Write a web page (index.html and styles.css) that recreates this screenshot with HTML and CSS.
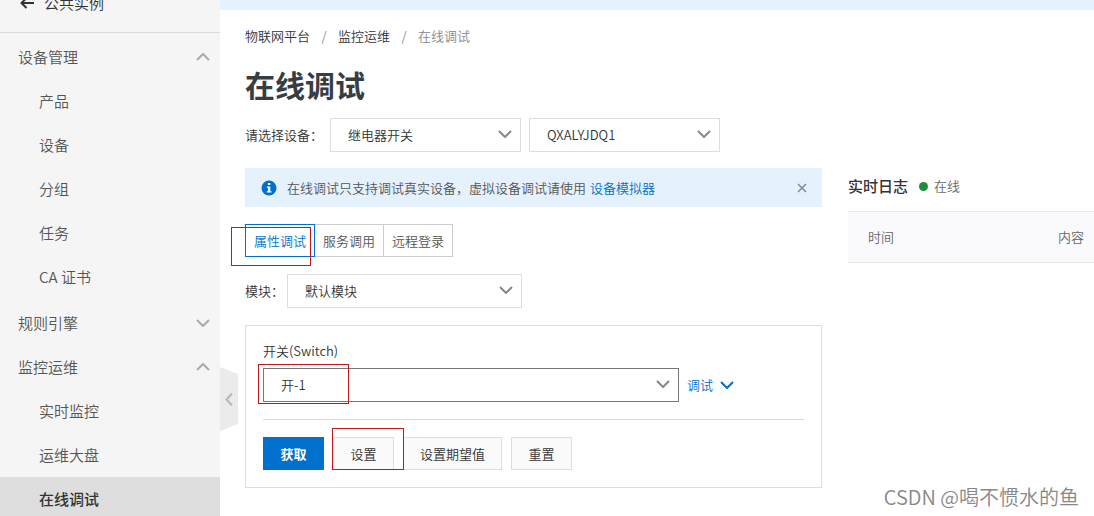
FILE: index.html
```html
<!DOCTYPE html>
<html lang="zh-CN">
<head>
<meta charset="utf-8">
<meta name="viewport" content="width=device-width, initial-scale=1">
<title>在线调试</title>
<link rel="stylesheet" href="styles.css">
</head>
<body>
<svg class="sprite" aria-hidden="true">
  <symbol id="chevron" viewBox="0 0 14 8"><path d="M1 1l6 6 6-6" fill="none" stroke="currentColor" stroke-width="2"/></symbol>
</svg>
<div class="app">
  <aside class="sidebar">
    <a class="instance" href="#">
      <svg class="back-icon" viewBox="0 0 14 12" aria-hidden="true"><path d="M14 6H2M6.500 1L1.500 6l5 5" fill="none" stroke="currentColor" stroke-width="2"/></svg>
      <span>公共实例</span>
    </a>
    <nav class="nav">
      <button class="nav-group" type="button">设备管理<svg class="chevron up"><use href="#chevron"/></svg></button>
      <ul class="nav-list">
        <li><a href="#">产品</a></li>
        <li><a href="#">设备</a></li>
        <li><a href="#">分组</a></li>
        <li><a href="#">任务</a></li>
        <li><a href="#">CA 证书</a></li>
      </ul>
      <button class="nav-group" type="button">规则引擎<svg class="chevron"><use href="#chevron"/></svg></button>
      <button class="nav-group" type="button">监控运维<svg class="chevron up"><use href="#chevron"/></svg></button>
      <ul class="nav-list">
        <li><a href="#">实时监控</a></li>
        <li><a href="#">运维大盘</a></li>
        <li><a class="current" href="#" aria-current="page">在线调试</a></li>
      </ul>
    </nav>
  </aside>
  <button class="collapse" type="button" aria-label="收起">
    <svg viewBox="0 0 18 64" aria-hidden="true"><path d="M0 0l18 7v50L0 64z" fill="#ebebeb"/><path d="M12 26.500L6.500 32.500l5.500 6" fill="none" stroke="#b8b8b8" stroke-width="2"/></svg>
  </button>
  <main class="main">
    <div class="topbar"></div>
    <div class="page">
      <nav class="breadcrumb" aria-label="路径">
        <a href="#">物联网平台</a><span class="slash">/</span><a href="#">监控运维</a><span class="slash">/</span><span class="here">在线调试</span>
      </nav>
      <h1>在线调试</h1>
      <div class="device-row">
        <label for="product">请选择设备：</label>
        <span class="select device">
          <select id="product"><option>继电器开关</option></select>
          <svg class="chevron"><use href="#chevron"/></svg>
        </span>
        <span class="select device">
          <select aria-label="设备"><option>QXALYJDQ1</option></select>
          <svg class="chevron"><use href="#chevron"/></svg>
        </span>
      </div>
      <div class="columns">
        <section class="debug">
          <div class="notice">
            <svg class="info-icon" viewBox="0 0 16 16" aria-hidden="true"><circle cx="8" cy="8" r="7.500" fill="#0070cc"/><path d="M6.900 2.900h2.400v2.200H6.900zM5.800 6.500h3.500v4.700h1.200v1.300H5.800v-1.300h1.200V7.800H5.800z" fill="#fff"/></svg>
            <p>在线调试只支持调试真实设备，虚拟设备调试请使用<a href="#">设备模拟器</a></p>
            <button class="close" type="button" aria-label="关闭"><svg viewBox="0 0 10 10"><path d="M1 1l8 8M9 1L1 9" fill="none" stroke="currentColor" stroke-width="1.500"/></svg></button>
          </div>
          <div class="tabs">
            <button class="tab active" type="button">属性调试</button>
            <button class="tab" type="button">服务调用</button>
            <button class="tab" type="button">远程登录</button>
            <span class="mark mark-tab"></span>
          </div>
          <div class="module-row">
            <label for="module">模块：</label>
            <span class="select module">
              <select id="module"><option>默认模块</option></select>
              <svg class="chevron"><use href="#chevron"/></svg>
            </span>
          </div>
          <div class="panel">
            <label class="field-label" for="switch">开关(Switch)</label>
            <div class="field">
              <span class="select dark">
                <select id="switch"><option>开-1</option></select>
                <svg class="chevron"><use href="#chevron"/></svg>
              </span>
              <button class="debug-menu" type="button">调试<svg class="chevron"><use href="#chevron"/></svg></button>
              <span class="mark mark-value"></span>
            </div>
            <div class="actions">
              <button class="btn primary" type="button">获取</button>
              <button class="btn" type="button">设置</button>
              <button class="btn" type="button">设置期望值</button>
              <button class="btn" type="button">重置</button>
              <span class="mark mark-set"></span>
            </div>
          </div>
        </section>
        <section class="log">
          <div class="log-head">
            <h2>实时日志</h2>
            <span class="dot"></span>
            <span class="status">在线</span>
          </div>
          <table class="log-table">
            <thead><tr><th scope="col">时间</th><th scope="col" class="content-col">内容</th></tr></thead>
          </table>
        </section>
      </div>
    </div>
  </main>
  <div class="watermark">CSDN @喝不惯水的鱼</div>
</div>
</body>
</html>
```
FILE: styles.css
```css
* { box-sizing: border-box; }

body {
  margin: 0;
  background: #fff;
  color: #333;
  font-family: "Noto Sans CJK SC", sans-serif;
  font-size: 13px;
  font-weight: 350;
  line-height: 22px;
}

button, select {
  font: inherit;
  color: inherit;
  margin: 0;
  border-radius: 0;
}

button { cursor: pointer; }
a { color: inherit; text-decoration: none; }
h1, h2, p, ul { margin: 0; padding: 0; }
ul { list-style: none; }
.sprite { position: absolute; width: 0; height: 0; }

.app {
  position: relative;
  display: flex;
  height: 100vh;
  overflow: hidden;
}

.chevron {
  width: 14px;
  height: 8px;
  color: #888;
  flex: none;
}
.chevron.up { transform: rotate(180deg); }

/* Sidebar */
.sidebar {
  flex: none;
  width: 220px;
  background: #f5f5f6;
  color: #555;
  font-size: 15px;
  overflow: hidden;
}
.instance {
  display: flex;
  align-items: center;
  gap: 10px;
  height: 59px;
  margin-top: -26px;
  padding-left: 20px;
  border-bottom: 1px solid #dadada;
  color: #333;
}
.back-icon { width: 14px; height: 12px; }
.nav { padding-top: 2px; }
.nav-group {
  display: flex;
  align-items: center;
  justify-content: space-between;
  width: 100%;
  height: 44px;
  padding: 0 10px 0 18px;
  border: 0;
  background: none;
}
.nav-group .chevron { color: #aaa; }
.nav-list { padding-bottom: 2px; }
.nav-list a {
  display: block;
  padding-left: 39px;
  line-height: 44px;
}
.nav-list .current {
  background: #dedede;
  color: #333;
  font-weight: 500;
}

.collapse {
  position: absolute;
  left: 220px;
  top: 367px;
  width: 18px;
  height: 64px;
  padding: 0;
  border: 0;
  background: none;
}
.collapse svg { display: block; width: 18px; height: 64px; }

/* Main */
.main { flex: 1; min-width: 0; }
.topbar { height: 10px; background: #e6f2fd; }
.page { padding: 15px 0 0 25px; }
.breadcrumb { display: flex; }
.slash { width: 28px; text-align: center; color: #888; }
.here { color: #888; }
h1 {
  margin: 15px 0 12px;
  font-size: 30px;
  line-height: 44px;
  font-weight: 700;
  color: #373d41;
}

.select {
  position: relative;
  display: flex;
}
.select select {
  appearance: none;
  width: 100%;
  height: 34px;
  padding: 0 36px 0 17px;
  border: 1px solid #dedede;
  background: #fff;
  outline: none;
}
.select .chevron {
  position: absolute;
  right: 9px;
  top: 12px;
  pointer-events: none;
}
.select.dark { flex: 1; }
.select.dark select { border-color: #777; }

.device-row, .module-row { display: flex; align-items: center; }
.device-row { gap: 8px; }
.device-row label { width: 77px; white-space: nowrap; }
.device { width: 191px; }

.columns {
  display: grid;
  grid-template-columns: 577fr 246fr;
  gap: 26px;
  margin-top: 16px;
}

.notice {
  display: flex;
  align-items: center;
  height: 39px;
  padding: 0 15px 0 16px;
  background: #e5f2fe;
  color: #555;
}
.info-icon { width: 16px; height: 16px; margin-right: 10px; }
.notice p { flex: 1; white-space: nowrap; }
.notice a { margin-left: 4px; color: #0070cc; }
.close {
  display: flex;
  padding: 0;
  border: 0;
  background: none;
  color: #808890;
}
.close svg { width: 10px; height: 10px; }

.tabs { position: relative; display: flex; margin-top: 17px; }
.tab {
  height: 33px;
  padding: 0 8px;
  border: 1px solid #ccc;
  background: #fff;
  color: #555;
}
.tab + .tab { margin-left: -1px; }
.tab.active {
  z-index: 1;
  border-color: #0070cc;
  color: #0070cc;
}

.module-row { margin-top: 17px; }
.module-row label { width: 42px; white-space: nowrap; }
.module { width: 235px; }

.panel {
  margin-top: 17px;
  padding: 14px 17px 17px;
  border: 1px solid #dedede;
}
.field-label { display: block; margin-bottom: 6px; }
.field {
  position: relative;
  display: flex;
  align-items: center;
  padding-bottom: 17px;
  border-bottom: 1px solid #d8d8d8;
}
.debug-menu {
  display: flex;
  align-items: center;
  gap: 7px;
  width: 125px;
  padding: 0 0 0 8px;
  border: 0;
  background: none;
  color: #0070cc;
}
.debug-menu .chevron { color: #0070cc; }
.actions {
  position: relative;
  display: flex;
  gap: 9px;
  margin-top: 17px;
}
.btn {
  min-width: 61px;
  height: 33px;
  padding: 0 16px;
  border: 1px solid #dedede;
  background: #fafafa;
}
.btn.primary {
  border-color: #0070cc;
  background: #0070cc;
  color: #fff;
  font-weight: 700;
}

/* Red annotation frames */
.mark {
  position: absolute;
  z-index: 2;
  border: 1px solid #c3161c;
  pointer-events: none;
}
.mark-tab { left: -14px; top: 3px; width: 80px; height: 39px; }
.mark-value { left: -5px; top: -4px; width: 91px; height: 40px; }
.mark-set { left: 69px; top: -9px; width: 72px; height: 42px; }

/* Log */
.log-head {
  display: flex;
  align-items: center;
  height: 36px;
}
h2 { font-size: 15px; font-weight: 500; }
.dot {
  width: 9px;
  height: 9px;
  margin: 0 6px 0 11px;
  border-radius: 50%;
  background: #1e8e3e;
}
.status { color: #666; }
.log-table {
  width: 100%;
  height: 52px;
  margin-top: 7px;
  border-collapse: collapse;
  background: #fafafc;
  color: #666;
}
.log-table th {
  padding: 0 0 0 20px;
  border: solid #e8e8ea;
  border-width: 1px 0;
  font-weight: 350;
  text-align: left;
}
.log-table .content-col { width: 35px; padding: 0 10px 0 0; white-space: nowrap; }

.watermark {
  position: absolute;
  right: 15px;
  bottom: 6px;
  font-size: 20px;
  line-height: 26px;
  color: #888;
}
```
